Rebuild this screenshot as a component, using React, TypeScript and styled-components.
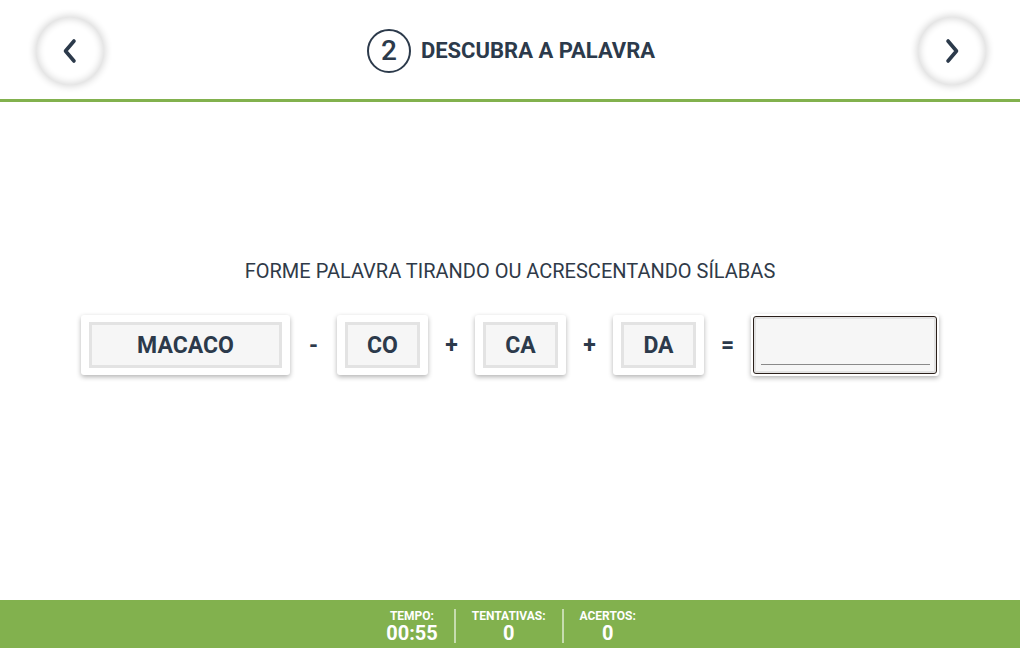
import React from "react";
import styled, { createGlobalStyle } from "styled-components";

const GlobalStyle = createGlobalStyle`
  html, body { margin: 0; padding: 0; height: 100%; }
  body { font-family: Roboto, "Noto Sans", Arial, sans-serif; background: #fff; color: #2c3a4b; }
  #root { height: 100%; }
  * { box-sizing: border-box; }
`;

const Page = styled.div`
  width: 1020px;
  height: 648px;
  display: flex;
  flex-direction: column;
  overflow: hidden;
`;

const Header = styled.header`
  height: 102px;
  flex: none;
  border-bottom: 3px solid #82b14e;
  display: flex;
  align-items: center;
  justify-content: space-between;
  padding: 2px 34px 0 36px;
`;

const NavButton = styled.button`
  width: 68px;
  height: 68px;
  border-radius: 50%;
  border: none;
  background: #fff;
  box-shadow: 0 0 7px 2px rgba(0, 0, 0, 0.14), inset 0 0 7px 2px rgba(0, 0, 0, 0.14);
  display: flex;
  align-items: center;
  justify-content: center;
  padding: 0;
  cursor: pointer;
`;

const Title = styled.div`
  display: flex;
  align-items: center;
  gap: 10px;
`;

const StepCircle = styled.div`
  width: 44px;
  height: 44px;
  border-radius: 50%;
  border: 2px solid #2c3a4b;
  display: flex;
  align-items: center;
  justify-content: center;
  font-size: 28px;
  font-weight: 500;
  color: #2c3a4b;
`;

const TitleText = styled.h1`
  margin: 0;
  font-size: 22px;
  font-weight: 700;
  color: #2c3a4b;
  text-transform: uppercase;
`;

const Main = styled.main`
  flex: 1;
  display: flex;
  flex-direction: column;
  align-items: center;
  padding-top: 157px;
`;

const Instruction = styled.p`
  margin: 0;
  font-size: 20px;
  line-height: 24px;
  color: #2f3a48;
`;

const Equation = styled.div`
  margin-top: 31px;
  display: flex;
  align-items: center;
`;

const Card = styled.div<{ $w: number }>`
  width: ${(p) => p.$w}px;
  height: 60px;
  background: #fff;
  border-radius: 3px;
  box-shadow: 0 2px 5px rgba(0, 0, 0, 0.3);
  padding: 7px 8px;
  display: flex;
`;

const Tile = styled.div`
  flex: 1;
  background: #f6f6f6;
  border: 3px solid #e3e3e3;
  display: flex;
  align-items: center;
  justify-content: center;
  font-size: 23px;
  font-weight: 700;
  color: #2c3a4b;
  padding-top: 1px;
`;

const Operator = styled.span`
  width: 47px;
  text-align: center;
  font-size: 23px;
  font-weight: 700;
  color: #2c3a4b;
`;

const AnswerCard = styled.div`
  width: 188px;
  height: 62px;
  background: #fff;
  border-radius: 3px;
  box-shadow: 0 2px 5px rgba(0, 0, 0, 0.3);
  padding: 2px;
  display: flex;
`;

const AnswerField = styled.div`
  flex: 1;
  border: 1px solid #2a1f1a;
  border-radius: 3px;
  background: #f6f6f6;
  box-shadow: inset 0 0 0 2px #e2e2e2;
  display: flex;
  align-items: flex-end;
  padding: 0 6px 8px 7px;
`;

const Underline = styled.div`
  flex: 1;
  height: 1px;
  background: #8a8a8a;
`;

const Footer = styled.footer`
  height: 48px;
  flex: none;
  background: #82b14e;
  display: flex;
  justify-content: center;
  align-items: center;
  padding: 4px 0 0 2px;
`;

const Stat = styled.div<{ $divider?: boolean }>`
  display: flex;
  flex-direction: column;
  align-items: center;
  padding: 0 16px;
  height: 34px;
  justify-content: center;
  border-left: ${(p) => (p.$divider ? "2px solid rgba(255,255,255,0.55)" : "none")};
  color: #fff;
  font-weight: 700;
`;

const StatLabel = styled.span`
  font-size: 12px;
  line-height: 13px;
`;

const StatValue = styled.span`
  font-size: 20px;
  line-height: 20px;
`;

const Chevron = ({ dir }: { dir: "left" | "right" }) => (
  <svg width="18" height="26" viewBox="0 0 18 26">
    <path
      d={dir === "left" ? "M13 3 L4.5 13 L13 23" : "M5 3 L13.5 13 L5 23"}
      fill="none"
      stroke="#2c3a4b"
      strokeWidth="3.6"
      strokeLinecap="round"
      strokeLinejoin="round"
    />
  </svg>
);

export default function App() {
  return (
    <>
      <GlobalStyle />
      <Page>
        <Header>
          <NavButton aria-label="anterior">
            <Chevron dir="left" />
          </NavButton>
          <Title>
            <StepCircle>2</StepCircle>
            <TitleText>Descubra a palavra</TitleText>
          </Title>
          <NavButton aria-label="próximo">
            <Chevron dir="right" />
          </NavButton>
        </Header>
        <Main>
          <Instruction>FORME PALAVRA TIRANDO OU ACRESCENTANDO SÍLABAS</Instruction>
          <Equation>
            <Card $w={209}>
              <Tile>MACACO</Tile>
            </Card>
            <Operator>-</Operator>
            <Card $w={91}>
              <Tile>CO</Tile>
            </Card>
            <Operator>+</Operator>
            <Card $w={91}>
              <Tile>CA</Tile>
            </Card>
            <Operator>+</Operator>
            <Card $w={91}>
              <Tile>DA</Tile>
            </Card>
            <Operator>=</Operator>
            <AnswerCard>
              <AnswerField>
                <Underline />
              </AnswerField>
            </AnswerCard>
          </Equation>
        </Main>
        <Footer>
          <Stat>
            <StatLabel>TEMPO:</StatLabel>
            <StatValue>00:55</StatValue>
          </Stat>
          <Stat $divider>
            <StatLabel>TENTATIVAS:</StatLabel>
            <StatValue>0</StatValue>
          </Stat>
          <Stat $divider>
            <StatLabel>ACERTOS:</StatLabel>
            <StatValue>0</StatValue>
          </Stat>
        </Footer>
      </Page>
    </>
  );
}
